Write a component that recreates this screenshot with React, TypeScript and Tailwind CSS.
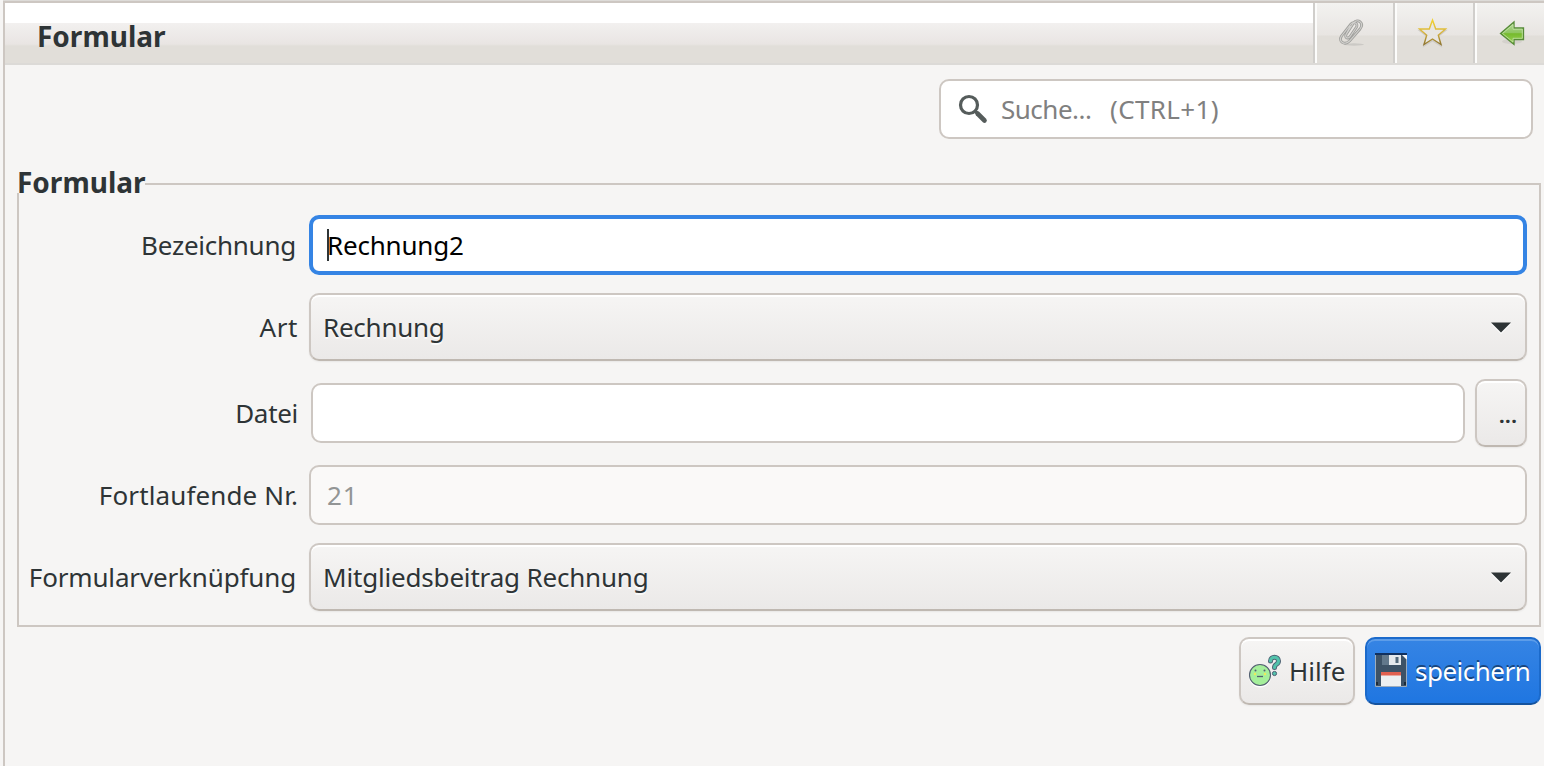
import type { ReactNode } from "react";

const raised =
  "border-2 border-[#cdc7c2] border-b-[#bfb8b1] rounded-[10px] bg-linear-to-b from-[#f6f5f4] to-[#ebe9e8] shadow-[inset_0_2px_0_#ffffff,0_1px_2px_rgba(0,0,0,0.06)]";
const entry = "h-[60px] border-2 border-[#cdc7c2] rounded-[10px] bg-white";
const etched = "[text-shadow:0_2px_0_rgba(255,255,255,0.75)]";

function ToolButton({ children, className }: { children: ReactNode; className: string }) {
  return (
    <button
      className={`flex h-[60px] items-center border-l-2 border-[#d0cecb] bg-[linear-gradient(to_bottom,#f3f2f0_0,#e8e5e2_32px,#e1ded9_33px,#e1ded9_100%)] shadow-[inset_2px_0_0_#fcfcfb] ${className}`}
    >
      {children}
    </button>
  );
}

function Row({ label, tracking, children }: { label: string; tracking: string; children: ReactNode }) {
  return (
    <div className="flex items-center">
      <label className="flex w-[290px] shrink-0 justify-end pr-[11px]">
        <span className={`whitespace-nowrap ${tracking}`}>{label}</span>
      </label>
      {children}
    </div>
  );
}

function Select({ value, tracking }: { value: string; tracking: string }) {
  return (
    <button className={`flex h-[68px] flex-1 items-center justify-between pr-[14px] pl-3 ${raised} ${etched}`}>
      <span className={tracking}>{value}</span>
      <svg width="20" height="14" viewBox="0 0 20 14">
        <path d="M0 4H20L10 14Z" fill="#fff" />
        <path d="M0 2.500H20L10 12.500Z" fill="#2e3436" />
      </svg>
    </button>
  );
}

function Paperclip() {
  const d = "M12.500 7L8 15.500C6.500 19 10.500 20.500 12.500 17L18.500 8C20.500 4.500 15.500 2 13 5L3.500 17C0 22.500 6.500 27 11.500 22L22 10C26.500 4 20 -1 15.500 4L8 15.500";
  return (
    <svg width="28" height="28" viewBox="0 0 28 28" fill="none">
      <ellipse cx="16" cy="25.500" rx="10" ry="1.200" fill="#cbc9c5" />
      <path d={d} stroke="#9f9f9c" strokeWidth="2.800" />
      <path d={d} stroke="#d2d1ce" strokeWidth="1.100" />
    </svg>
  );
}

function Star() {
  return (
    <svg width="32" height="32" viewBox="0 0 32 32" fill="none">
      <defs>
        <linearGradient id="gold" x1="0" y1="0" x2="0" y2="1">
          <stop offset="0" stopColor="#f2d22e" />
          <stop offset="0.500" stopColor="#d9b53d" />
          <stop offset="1" stopColor="#8f7530" />
        </linearGradient>
      </defs>
      <path d="M15.500 4.500L19 13.500H28.500L21 19.500L24 29L15.500 23.500L7 29L10 19.500L2.500 13.500H12Z" stroke="#cfccc7" strokeWidth="1.500" />
      <path d="M15.500 3L18.700 12H28.500L21.300 18.200L24 27.500L15.500 22L7 27.500L9.700 18.200L2.500 12H12.300Z" fill="#e8e6e2" stroke="url(#gold)" strokeWidth="1.400" />
    </svg>
  );
}

function BackArrow() {
  return (
    <svg width="26" height="26" viewBox="0 0 26 26">
      <defs>
        <linearGradient id="leaf" x1="0" y1="0" x2="0" y2="1">
          <stop offset="0" stopColor="#b5d99b" />
          <stop offset="0.480" stopColor="#8fc661" />
          <stop offset="0.520" stopColor="#76bb2c" />
          <stop offset="1" stopColor="#9bd35c" />
        </linearGradient>
      </defs>
      <ellipse cx="13" cy="21.500" rx="10" ry="2.500" fill="#d4d1cc" />
      <path d="M1.500 13.500L15 2V8H24.500V19.500H15V24.500Z" fill="url(#leaf)" stroke="#568a38" strokeWidth="1.300" />
      <path d="M3.500 13.500L14 4.500V9.200H23.300V18.300H14V22Z" fill="none" stroke="#c5e3a8" strokeWidth="0.800" />
    </svg>
  );
}

function HelpFace() {
  return (
    <svg width="34" height="34" viewBox="0 0 34 34">
      <circle cx="12" cy="22.500" r="11" fill="#fff" />
      <circle cx="12" cy="21" r="10.500" fill="#a5ef9b" stroke="#535f71" strokeWidth="1.100" />
      <circle cx="7.500" cy="16.500" r="1" fill="#535f71" />
      <circle cx="16.500" cy="16.500" r="1" fill="#535f71" />
      <circle cx="7" cy="20" r="1.200" fill="#f0e95a" />
      <circle cx="17" cy="20" r="1.200" fill="#f0e95a" />
      <path d="M9 22.500H15" stroke="#535f71" strokeWidth="1.300" />
      <path d="M22.500 7C22.500 2 30.500 2 30.500 7C30.500 11 26.500 9.500 26.500 13.500" fill="none" stroke="#4c6072" strokeWidth="5" strokeLinecap="round" />
      <path d="M22.500 7C22.500 2 30.500 2 30.500 7C30.500 11 26.500 9.500 26.500 13.500" fill="none" stroke="#52c2ab" strokeWidth="3.200" strokeLinecap="round" />
      <circle cx="26.500" cy="19.500" r="2.100" fill="#52c2ab" stroke="#4c6072" strokeWidth="1" />
    </svg>
  );
}

function Floppy() {
  return (
    <svg className="mb-[2px]" width="32" height="34" viewBox="0 0 32 34">
      <path d="M0 0H32V6H0Z" fill="#10305f" />
      <path d="M0 2H28L32 6V34H0Z" fill="#3d5266" />
      <path d="M27 2H32V7Z" fill="#f4f6f8" />
      <path d="M7 2H15V12H7Z" fill="#62788b" />
      <path d="M14 2H26V12H14Z" fill="#e4e8ec" />
      <path d="M20.500 4H23.500V10H20.500Z" fill="#52687a" />
      <path d="M6 19H26V33H6Z" fill="#eceff1" />
      <path d="M6 19H26V22.500H6Z" fill="#e0604f" />
      <path d="M1 29H3V32H1ZM29 29H31V32H29Z" fill="#1d2b38" />
      <path d="M0.500 2V33.500H31.500V6" fill="none" stroke="#b5c4d2" strokeWidth="0.800" />
    </svg>
  );
}

export default function App() {
  return (
    <div className="flex h-[766px] w-[1544px] overflow-hidden bg-[#f6f5f4] pl-[3px] font-['Noto_Sans',sans-serif] text-[26px] leading-[36px] text-[#2e3436]">
      <div className="flex flex-1 flex-col border-t border-[#dddbd8]">
        <div className="flex flex-1 flex-col border-t-2 border-l-2 border-[#cdc7c2]">
          <header className="flex h-[62px] w-[1539px] border-b-2 border-[#dcdad7]">
            <h1 className="flex h-[60px] flex-1 items-center bg-[linear-gradient(to_bottom,#ffffff_0,#ffffff_20px,#f2f0ef_20px,#e9e5e3_41px,#e1ded9_43px,#e1ded9_100%)] pt-[6px] pl-[32px] text-[28px] font-bold">
              Formular
            </h1>
            <ToolButton className="w-[80px] pl-[23px]"><Paperclip /></ToolButton>
            <ToolButton className="w-[80px] pl-[22px]"><Star /></ToolButton>
            <ToolButton className="w-[71px] pl-[24px]"><BackArrow /></ToolButton>
          </header>

          <div className={`mt-[14px] mr-[11px] flex w-[594px] items-center self-end pl-[17px] text-[#808080] ${entry}`}>
            <svg className="mr-[13px]" width="30" height="30" viewBox="0 0 30 30" fill="none" stroke="#555c5b">
              <circle cx="11" cy="11" r="8.500" strokeWidth="3.200" />
              <path d="M17.500 17.500L19.500 19.500" strokeWidth="3" />
              <path d="M19.500 19.500L26.500 26.500" strokeWidth="4.600" strokeLinecap="round" />
            </svg>
            <span className="w-[109px] tracking-[-0.5px]">Suche...</span>
            <span className="tracking-[0.35px]">(CTRL+1)</span>
          </div>

          <section className="relative mt-[44px] ml-3 h-[444px] w-[1524px] border-2 border-[#cdc7c2] pt-[30px] pr-3">
            <h2 className="absolute -top-[20px] -left-[2px] h-[28px] w-[128px] bg-[#f6f5f4] text-[28px] leading-[34px] font-bold">
              Formular
            </h2>
            <div className="flex flex-col gap-[18px]">
              <Row label="Bezeichnung" tracking="pr-[2px] tracking-[-0.25px]">
                <div className="flex h-[60px] flex-1 items-center rounded-[10px] border-4 border-[#3584e4] bg-white pl-[14px] text-black">
                  <span className="h-8 w-[2px] bg-[#2e3436]" />
                  <span className="-ml-[2px] tracking-[-0.2px]">Rechnung2</span>
                </div>
              </Row>
              <Row label="Art" tracking="tracking-[0.6px]">
                <Select value="Rechnung" tracking="tracking-[-0.25px]" />
              </Row>
              <Row label="Datei" tracking="tracking-[-0.3px]">
                <div className={`ml-[2px] flex-1 ${entry}`} />
                <button className={`ml-[10px] flex h-[68px] w-[52px] items-center pl-[22px] text-[20px] font-bold ${raised}`}>
                  <span className="pt-[6px] tracking-[0.5px]">...</span>
                </button>
              </Row>
              <Row label="Fortlaufende Nr." tracking="tracking-[0.13px]">
                <div className="flex h-[60px] flex-1 items-center rounded-[10px] border-2 border-[#cdc7c2] bg-[#faf9f8] pl-4 text-[#929595]">
                  <span className="tracking-[1px]">21</span>
                </div>
              </Row>
              <Row label="Formularverknüpfung" tracking="pr-[2px] tracking-[-0.15px]">
                <Select value="Mitgliedsbeitrag Rechnung" tracking="tracking-[-0.18px]" />
              </Row>
            </div>
          </section>

          <footer className="mt-[10px] mr-[3px] flex justify-end gap-[10px]">
            <button className={`flex h-[68px] w-[116px] items-center gap-[7px] pl-[7px] ${raised} ${etched}`}>
              <HelpFace />
              <span>Hilfe</span>
            </button>
            <button className="flex h-[68px] w-[176px] items-center gap-[8px] rounded-[10px] border-2 border-[#1b6acb] border-b-[#15539e] bg-linear-to-b from-[#3584e4] to-[#1f76e1] pl-2 text-white shadow-[inset_0_2px_0_#5d9de9] [text-shadow:0_-2px_0_rgba(0,0,0,0.45)]">
              <Floppy />
              <span className="tracking-[-0.5px]">speichern</span>
            </button>
          </footer>
        </div>
      </div>
    </div>
  );
}
